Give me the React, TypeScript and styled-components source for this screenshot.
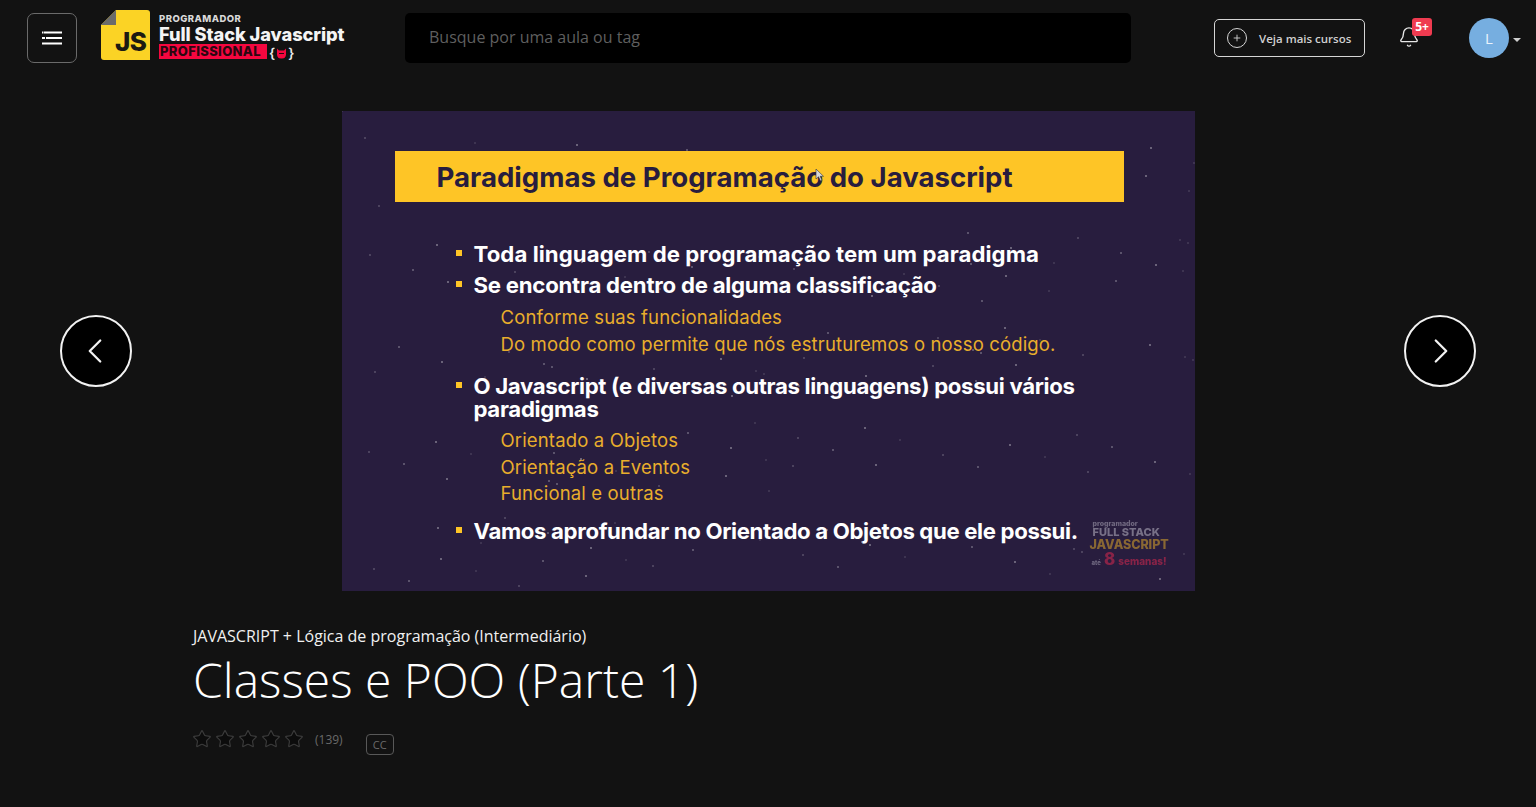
import styled, { createGlobalStyle } from "styled-components";
import { Bell, ChevronLeft, ChevronRight, Plus, Star } from "lucide-react";

const GlobalStyle = createGlobalStyle`
    html, body {
        margin: 0;
        padding: 0;
        background: #121212;
        font-family: "Open Sans", "Liberation Sans", sans-serif;
        color: #fff;
        overflow: hidden;
    }
    * {
        box-sizing: border-box;
    }
`;

/* estrelas do fundo do slide (nenhuma em cima da marca d'água) */
const starPoints = Array.from({ length: 170 }, (_, i) => ({
    x: (i * 137 + (i % 7) * 41) % 853,
    y: (i * 211 + (i % 5) * 67) % 480,
    alpha: 0.1 + (i % 4) * 0.07,
}))
    .filter((s) => !(s.x > 745 && s.x < 835 && s.y > 405 && s.y < 460))
    .map((s) => `radial-gradient(circle at ${s.x}px ${s.y}px, rgba(255,255,255,${s.alpha}) 0.7px, transparent 1.4px)`)
    .join(", ");

const Page = styled.div`
    width: 1536px;
    height: 807px;
    display: flex;
    flex-direction: column;
    background: #121212;
`;

const Header = styled.header`
    height: 76px;
    padding: 13px 0 0 27px;
    display: flex;
    align-items: flex-start;
`;

const MenuButton = styled.button`
    width: 50px;
    height: 50px;
    border: 1px solid #6a6a6a;
    border-radius: 7px;
    background: transparent;
    display: flex;
    align-items: center;
    justify-content: center;
    padding: 0;
`;

const LogoBlock = styled.div`
    margin: -3px 0 0 24px;
    width: 244px;
    height: 50px;
    display: flex;
    gap: 9px;
`;

const LogoFile = styled.div`
    position: relative;
    width: 49px;
    height: 50px;
    flex: none;
`;

const LogoJs = styled.span`
    position: absolute;
    left: 14px;
    bottom: 3px;
    font-family: "Inter", sans-serif;
    font-size: 26px;
    line-height: 30px;
    font-weight: 800;
    color: #1c1a12;
    letter-spacing: -0.5px;
`;

const LogoText = styled.div`
    display: flex;
    flex-direction: column;
    font-family: "Inter", sans-serif;
    font-weight: 800;
    padding-top: 3px;
`;

const LogoSmall = styled.span`
    font-size: 9.5px;
    line-height: 11px;
    letter-spacing: 0.45px;
    color: #d8d8d8;
`;

const LogoBig = styled.span`
    font-size: 18.3px;
    line-height: 20px;
    letter-spacing: -0.1px;
    color: #f4f4f4;
    white-space: nowrap;
`;

const LogoRow = styled.div`
    display: flex;
    align-items: center;
    gap: 2px;
`;

const LogoTag = styled.span`
    width: 108px;
    height: 15px;
    background: #f5073f;
    color: #2a0710;
    font-size: 13px;
    line-height: 15px;
    letter-spacing: 0.35px;
    padding-left: 1px;
    white-space: nowrap;
    overflow: hidden;
`;

const LogoBrace = styled.span`
    font-size: 13.5px;
    line-height: 15px;
    font-weight: 600;
    color: #eee;
    display: flex;
    align-items: center;
    gap: 1px;
    transform: translateY(1.5px);
`;

const SearchBox = styled.div`
    margin-left: 60px;
    width: 726px;
    height: 50px;
    background: #000;
    border-radius: 5px;
    padding: 0 0 2px 24px;
    display: flex;
    align-items: center;
    font-size: 16px;
    color: #5f5f5f;
`;

const CoursesButton = styled.button`
    margin: 6px 0 0 83px;
    width: 151px;
    height: 38px;
    border: 1px solid #d5d5d5;
    border-radius: 5px;
    background: transparent;
    color: #d0d0d0;
    font-family: inherit;
    font-size: 11.5px;
    font-weight: 600;
    display: flex;
    align-items: center;
    padding: 0 0 0 12px;
    gap: 12px;
`;

const PlusCircle = styled.span`
    width: 20px;
    height: 20px;
    border: 1px solid #d5d5d5;
    border-radius: 50%;
    display: flex;
    align-items: center;
    justify-content: center;
`;

const BellBox = styled.div`
    position: relative;
    margin: 13px 0 0 33px;
    width: 22px;
    height: 22px;
    color: #e8e8e8;
`;

const Badge = styled.span`
    position: absolute;
    left: 14px;
    top: -8px;
    width: 20px;
    height: 18px;
    border-radius: 3px;
    background: #ef3b50;
    color: #fff;
    font-size: 12px;
    font-weight: 700;
    line-height: 18px;
    text-align: center;
`;

const Avatar = styled.div`
    margin: 5px 0 0 49px;
    width: 40px;
    height: 40px;
    border-radius: 50%;
    background: #76aee0;
    color: #eaf3fb;
    font-size: 15px;
    display: flex;
    align-items: center;
    justify-content: center;
`;

const Caret = styled.span`
    margin: 25px 0 0 4px;
    width: 0;
    height: 0;
    border-left: 4px solid transparent;
    border-right: 4px solid transparent;
    border-top: 4px solid #cfcfcf;
`;

const Stage = styled.section`
    margin-top: 35px;
    padding: 0 60px;
    display: flex;
    align-items: center;
    justify-content: space-between;
`;

const ArrowButton = styled.button<{ $side: "left" | "right" }>`
    width: 72px;
    height: 72px;
    flex: none;
    border: 2px solid #f2f2f2;
    border-radius: 50%;
    background: #000;
    color: #f2f2f2;
    padding: ${(p) => (p.$side === "left" ? "0 2px 0 0" : "0 0 0 2px")};
    display: flex;
    align-items: center;
    justify-content: center;
`;

const Slide = styled.div`
    position: relative;
    width: 853px;
    height: 480px;
    flex: none;
    background-color: #281d3e;
    background-image: ${starPoints};
    padding: 40px 0 0 53px;
    font-family: "Inter", "Open Sans", sans-serif;
`;

const SlideTitle = styled.div`
    width: 729px;
    height: 51px;
    background: #fec526;
    color: #281d3e;
    font-size: 27.6px;
    font-weight: 700;
    line-height: 52px;
    padding-left: 42px;
    white-space: nowrap;
`;

const SlideList = styled.div`
    margin: 40px 0 0 61px;
    width: 640px;
`;

const Bullet = styled.div<{ $gap: number; $track: number }>`
    position: relative;
    margin-top: ${(p) => p.$gap}px;
    padding-left: 18px;
    color: #fff;
    font-size: 22.2px;
    font-weight: 700;
    letter-spacing: ${(p) => p.$track}px;
    line-height: 23px;
    &::before {
        content: "";
        position: absolute;
        left: 0;
        top: 8px;
        width: 6px;
        height: 6px;
        background: #fec526;
    }
`;

const SubLine = styled.div<{ $gap: number }>`
    margin: ${(p) => p.$gap}px 0 0 45px;
    color: #e9ae2c;
    font-size: 18.5px;
    font-weight: 400;
    line-height: 24px;
    letter-spacing: 0.15px;
    white-space: nowrap;
`;

const Watermark = styled.div`
    position: absolute;
    left: 748px;
    top: 409px;
    width: 82px;
    font-weight: 800;
    line-height: 1;
    opacity: 0.55;
    filter: blur(0.4px);
`;

const MarkSmall = styled.div`
    font-size: 7px;
    color: #a9a4b5;
    margin-left: 3px;
`;

const MarkMid = styled.div`
    font-size: 11px;
    color: #b9b5c3;
    margin-left: 3px;
`;

const MarkGold = styled.div`
    font-size: 12.5px;
    line-height: 13px;
    color: #d9a52b;
    letter-spacing: -0.05px;
`;

const MarkRed = styled.div`
    display: flex;
    align-items: baseline;
    gap: 3px;
    font-size: 10px;
    color: #d8284f;
    margin-left: 2px;
`;

const MarkUntil = styled.span`
    font-size: 6px;
    color: #a9a4b5;
`;

const MarkEight = styled.span`
    font-size: 17px;
`;

const PointerMark = styled.svg`
    position: absolute;
    left: 473px;
    top: 57px;
`;

const Info = styled.section`
    padding: 34px 0 0 193px;
`;

const Course = styled.div`
    font-size: 16px;
    line-height: 22px;
    color: #f0f0f0;
`;

const Title = styled.h1`
    margin: 2px 0 0;
    font-size: 48px;
    line-height: 62px;
    font-weight: 300;
    color: #fff;
`;

const MetaRow = styled.div`
    margin-top: 18px;
    display: flex;
    align-items: flex-start;
`;

const Stars = styled.div`
    display: flex;
    gap: 3px;
    margin-left: -1px;
    color: #3c3c3c;
`;

const Votes = styled.span`
    margin: 2px 0 0 11px;
    font-size: 12px;
    line-height: 18px;
    color: #6a6a6a;
`;

const CcTag = styled.span`
    margin: 5px 0 0 23px;
    width: 28px;
    height: 21px;
    border: 1px solid #585858;
    border-radius: 4px;
    color: #6a6a6a;
    font-size: 11px;
    line-height: 20px;
    text-align: center;
`;

const App = () => {
    return (
        <Page>
            <GlobalStyle />
            <Header>
                <MenuButton aria-label="menu">
                    <svg width="20" height="14" viewBox="0 0 20 14">
                        <rect x="2" y="0.5" width="18" height="2" fill="#fff" />
                        <rect x="0" y="0.5" width="1.5" height="2" fill="#fff" />
                        <rect x="4" y="6" width="16" height="2" fill="#fff" />
                        <rect x="0" y="6" width="3" height="2" fill="#fff" />
                        <rect x="0" y="11.5" width="20" height="2" fill="#fff" />
                    </svg>
                </MenuButton>
                <LogoBlock>
                    <LogoFile>
                        <svg width="49" height="50" viewBox="0 0 49 50">
                            <path d="M15 0H46a3 3 0 0 1 3 3V50H3a3 3 0 0 1-3-3V15Z" fill="#fbd325" />
                            <path d="M15 0V15H0Z" fill="#6b6b6b" />
                        </svg>
                        <LogoJs>JS</LogoJs>
                    </LogoFile>
                    <LogoText>
                        <LogoSmall>PROGRAMADOR</LogoSmall>
                        <LogoBig>Full Stack Javascript</LogoBig>
                        <LogoRow>
                            <LogoTag>PROFISSIONAL</LogoTag>
                            <LogoBrace>
                                {"{"}
                                <svg width="11" height="11" viewBox="0 0 11 11">
                                    <path d="M1 1 3 3H8L10 1V7A3.5 3.5 0 0 1 1 7Z" fill="#f5073f" />
                                    <path d="M3 6H8" stroke="#2a0710" strokeWidth="1.2" />
                                </svg>
                                {"}"}
                            </LogoBrace>
                        </LogoRow>
                    </LogoText>
                </LogoBlock>
                <SearchBox>Busque por uma aula ou tag</SearchBox>
                <CoursesButton>
                    <PlusCircle>
                        <Plus size={10} strokeWidth={2.2} />
                    </PlusCircle>
                    Veja mais cursos
                </CoursesButton>
                <BellBox>
                    <Bell size={22} strokeWidth={1.5} />
                    <Badge>5+</Badge>
                </BellBox>
                <Avatar>L</Avatar>
                <Caret />
            </Header>

            <Stage>
                <ArrowButton $side="left" aria-label="anterior">
                    <ChevronLeft size={42} strokeWidth={1.3} />
                </ArrowButton>
                <Slide>
                    <SlideTitle>Paradigmas de Programação do Javascript</SlideTitle>
                    <SlideList>
                        <Bullet $gap={0} $track={0.07}>Toda linguagem de programação tem um paradigma</Bullet>
                        <Bullet $gap={8} $track={-0.24}>Se encontra dentro de alguma classificação</Bullet>
                        <SubLine $gap={9}>Conforme suas funcionalidades</SubLine>
                        <SubLine $gap={3}>Do modo como permite que nós estruturemos o nosso código.</SubLine>
                        <Bullet $gap={18} $track={-0.33}>O Javascript (e diversas outras linguagens) possui vários paradigmas</Bullet>
                        <SubLine $gap={8}>Orientado a Objetos</SubLine>
                        <SubLine $gap={3}>Orientação a Eventos</SubLine>
                        <SubLine $gap={2}>Funcional e outras</SubLine>
                        <Bullet $gap={14} $track={-0.35}>Vamos aprofundar no Orientado a Objetos que ele possui.</Bullet>
                    </SlideList>
                    <Watermark>
                        <MarkSmall>programador</MarkSmall>
                        <MarkMid>FULL STACK</MarkMid>
                        <MarkGold>JAVASCRIPT</MarkGold>
                        <MarkRed>
                            <MarkUntil>até</MarkUntil>
                            <MarkEight>8</MarkEight>
                            semanas!
                        </MarkRed>
                    </Watermark>
                    <PointerMark width="10" height="14" viewBox="0 0 10 14">
                        <path d="M1 1V11L3.5 8.8 5.5 13 7 12.3 5.2 8.3H8.5Z" fill="#d8d8d8" stroke="#333" strokeWidth="0.6" />
                    </PointerMark>
                </Slide>
                <ArrowButton $side="right" aria-label="próxima">
                    <ChevronRight size={42} strokeWidth={1.3} />
                </ArrowButton>
            </Stage>

            <Info>
                <Course>JAVASCRIPT + Lógica de programação (Intermediário)</Course>
                <Title>Classes e POO (Parte 1)</Title>
                <MetaRow>
                    <Stars>
                        {[0, 1, 2, 3, 4].map((i) => (
                            <Star key={i} size={20} strokeWidth={1.4} fill="#0c0c0c" />
                        ))}
                    </Stars>
                    <Votes>(139)</Votes>
                    <CcTag>CC</CcTag>
                </MetaRow>
            </Info>
        </Page>
    );
};

export default App;
